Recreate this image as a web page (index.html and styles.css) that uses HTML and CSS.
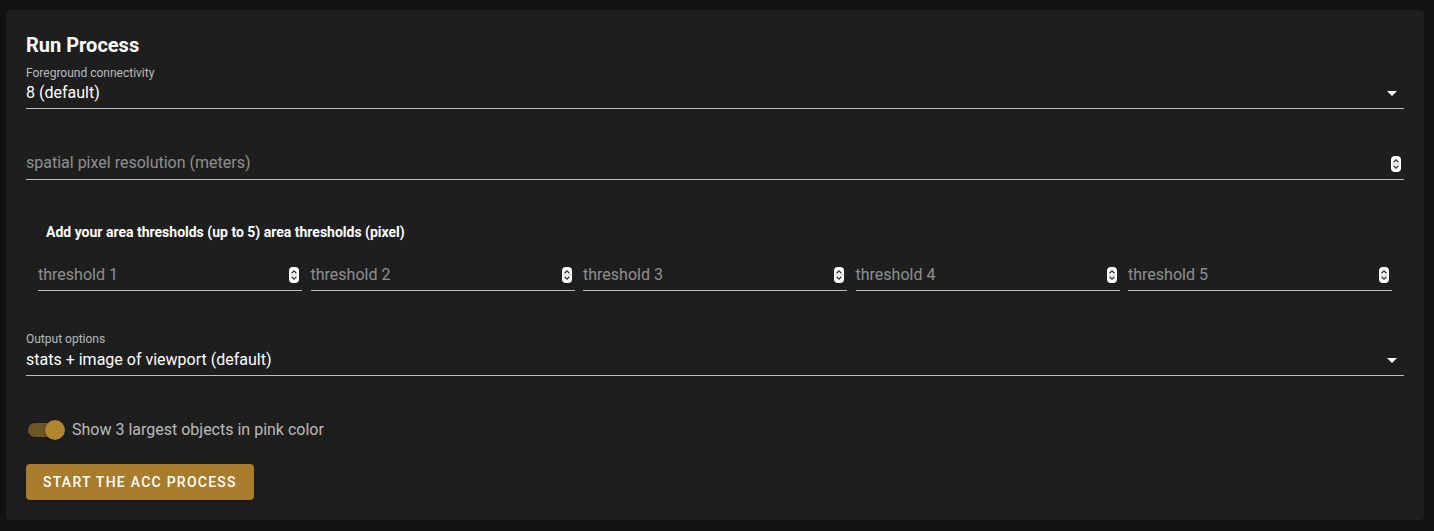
FILE: index.html
```html
<!DOCTYPE html>
<html lang="en">
<head>
<meta charset="utf-8">
<title>Run Process</title>
<link rel="stylesheet" href="styles.css">
</head>
<body>
<div class="card">
  <h2 class="title">Run Process</h2>

  <div class="field select-field first">
    <div class="label">Foreground connectivity</div>
    <div class="control">
      <span class="value">8 (default)</span>
      <svg class="arrow" width="24" height="24" viewBox="0 0 24 24"><path d="M7 10l5 5 5-5z" fill="#fff"/></svg>
    </div>
  </div>

  <div class="field text-field spatial">
    <div class="control">
      <span class="placeholder">spatial pixel resolution (meters)</span>
      <svg class="spin" width="10" height="16" viewBox="0 0 10 16"><rect width="10" height="16" rx="4" fill="#fff"/><line x1="0.5" y1="8" x2="9.5" y2="8" stroke="#cfcfcf" stroke-width="1"/><path d="M2.6 6.2L5 3.8l2.4 2.4" stroke="#333" stroke-width="1.3" fill="none"/><path d="M2.6 9.8L5 12.2l2.4-2.4" stroke="#333" stroke-width="1.3" fill="none"/></svg>
    </div>
  </div>

  <div class="thresholds">
    <div class="th-heading">Add your area thresholds (up to 5) area thresholds (pixel)</div>
    <div class="th-grid">
      <div class="th-cell"><div class="control"><span class="placeholder">threshold 1</span><svg class="spin" width="10" height="16" viewBox="0 0 10 16"><rect width="10" height="16" rx="4" fill="#fff"/><line x1="0.5" y1="8" x2="9.5" y2="8" stroke="#cfcfcf" stroke-width="1"/><path d="M2.6 6.2L5 3.8l2.4 2.4" stroke="#333" stroke-width="1.3" fill="none"/><path d="M2.6 9.8L5 12.2l2.4-2.4" stroke="#333" stroke-width="1.3" fill="none"/></svg></div></div>
      <div class="th-cell"><div class="control"><span class="placeholder">threshold 2</span><svg class="spin" width="10" height="16" viewBox="0 0 10 16"><rect width="10" height="16" rx="4" fill="#fff"/><line x1="0.5" y1="8" x2="9.5" y2="8" stroke="#cfcfcf" stroke-width="1"/><path d="M2.6 6.2L5 3.8l2.4 2.4" stroke="#333" stroke-width="1.3" fill="none"/><path d="M2.6 9.8L5 12.2l2.4-2.4" stroke="#333" stroke-width="1.3" fill="none"/></svg></div></div>
      <div class="th-cell"><div class="control"><span class="placeholder">threshold 3</span><svg class="spin" width="10" height="16" viewBox="0 0 10 16"><rect width="10" height="16" rx="4" fill="#fff"/><line x1="0.5" y1="8" x2="9.5" y2="8" stroke="#cfcfcf" stroke-width="1"/><path d="M2.6 6.2L5 3.8l2.4 2.4" stroke="#333" stroke-width="1.3" fill="none"/><path d="M2.6 9.8L5 12.2l2.4-2.4" stroke="#333" stroke-width="1.3" fill="none"/></svg></div></div>
      <div class="th-cell"><div class="control"><span class="placeholder">threshold 4</span><svg class="spin" width="10" height="16" viewBox="0 0 10 16"><rect width="10" height="16" rx="4" fill="#fff"/><line x1="0.5" y1="8" x2="9.5" y2="8" stroke="#cfcfcf" stroke-width="1"/><path d="M2.6 6.2L5 3.8l2.4 2.4" stroke="#333" stroke-width="1.3" fill="none"/><path d="M2.6 9.8L5 12.2l2.4-2.4" stroke="#333" stroke-width="1.3" fill="none"/></svg></div></div>
      <div class="th-cell"><div class="control"><span class="placeholder">threshold 5</span><svg class="spin" width="10" height="16" viewBox="0 0 10 16"><rect width="10" height="16" rx="4" fill="#fff"/><line x1="0.5" y1="8" x2="9.5" y2="8" stroke="#cfcfcf" stroke-width="1"/><path d="M2.6 6.2L5 3.8l2.4 2.4" stroke="#333" stroke-width="1.3" fill="none"/><path d="M2.6 9.8L5 12.2l2.4-2.4" stroke="#333" stroke-width="1.3" fill="none"/></svg></div></div>
    </div>
  </div>

  <div class="field select-field output">
    <div class="label">Output options</div>
    <div class="control">
      <span class="value">stats + image of viewport (default)</span>
      <svg class="arrow" width="24" height="24" viewBox="0 0 24 24"><path d="M7 10l5 5 5-5z" fill="#fff"/></svg>
    </div>
  </div>

  <label class="switch-row">
    <span class="switch"><span class="track"></span><span class="thumb"></span></span>
    <span class="switch-label">Show 3 largest objects in pink color</span>
  </label>

  <button class="btn" type="button">Start the ACC process</button>
</div>
</body>
</html>
```
FILE: styles.css
```css
* { box-sizing: border-box; }

html, body {
  margin: 0;
  background: #121212;
}

body {
  padding: 10px 10px 11px 6px;
  font-family: Roboto, "Noto Sans", "Liberation Sans", sans-serif;
  color: #fff;
}

.card {
  background: #1e1e1e;
  border-radius: 4px;
  padding: 23px 20px 21px;
  height: 510px;
}

.title {
  margin: 0;
  font-size: 20px;
  line-height: 24px;
  font-weight: 700;
}

.field .label {
  font-size: 12px;
  line-height: 16px;
  color: rgba(255, 255, 255, 0.7);
}

.field.first { margin-top: 8px; }

.control {
  display: flex;
  align-items: center;
  justify-content: space-between;
  border-bottom: 1px solid rgba(255, 255, 255, 0.7);
  font-size: 16px;
  line-height: 24px;
}

.select-field .control {
  padding: 0 0 3px;
}

.select-field .arrow {
  display: block;
  flex: none;
}

.value { color: #fff; }

.placeholder { color: rgba(255, 255, 255, 0.5); }

.spin {
  display: block;
  flex: none;
  margin-right: 3px;
}

.spatial { margin-top: 40px; }
.spatial .control { padding: 2px 0 4px; }
.spatial .spin { margin-top: 2px; }

.thresholds {
  margin: 42px 12px 0;
}

.th-heading {
  padding-left: 8px;
  font-size: 14px;
  line-height: 20px;
  font-weight: 700;
}

.th-grid {
  display: grid;
  grid-template-columns: repeat(5, 1fr);
  column-gap: 8.5px;
  margin-top: 21px;
}

.th-cell .control { padding: 0 0 3px; }

.output { margin-top: 40px; }
.output .label { margin-bottom: 1px; }

.switch-row {
  display: flex;
  align-items: center;
  margin-top: 42px;
  height: 24px;
}

.switch {
  position: relative;
  width: 38px;
  height: 20px;
  flex: none;
}

.switch .track {
  position: absolute;
  left: 2px;
  top: 3px;
  width: 34px;
  height: 14px;
  border-radius: 7px;
  background: #6e5526;
}

.switch .thumb {
  position: absolute;
  left: 19px;
  top: 0;
  width: 20px;
  height: 20px;
  border-radius: 50%;
  background: #b2852f;
  box-shadow: 0 1px 3px rgba(0, 0, 0, 0.4);
}

.switch-label {
  margin-left: 8px;
  font-size: 16px;
  line-height: 24px;
  color: rgba(255, 255, 255, 0.7);
}

.btn {
  display: block;
  margin-top: 22px;
  height: 36px;
  padding: 0 17px;
  border: 0;
  border-radius: 4px;
  background: #a87c2b;
  color: #fff;
  font-family: Roboto, "Noto Sans", "Liberation Sans", sans-serif;
  font-size: 14px;
  font-weight: 500;
  letter-spacing: 1.25px;
  text-transform: uppercase;
  box-shadow: 0 2px 3px rgba(0, 0, 0, 0.3);
}
```
